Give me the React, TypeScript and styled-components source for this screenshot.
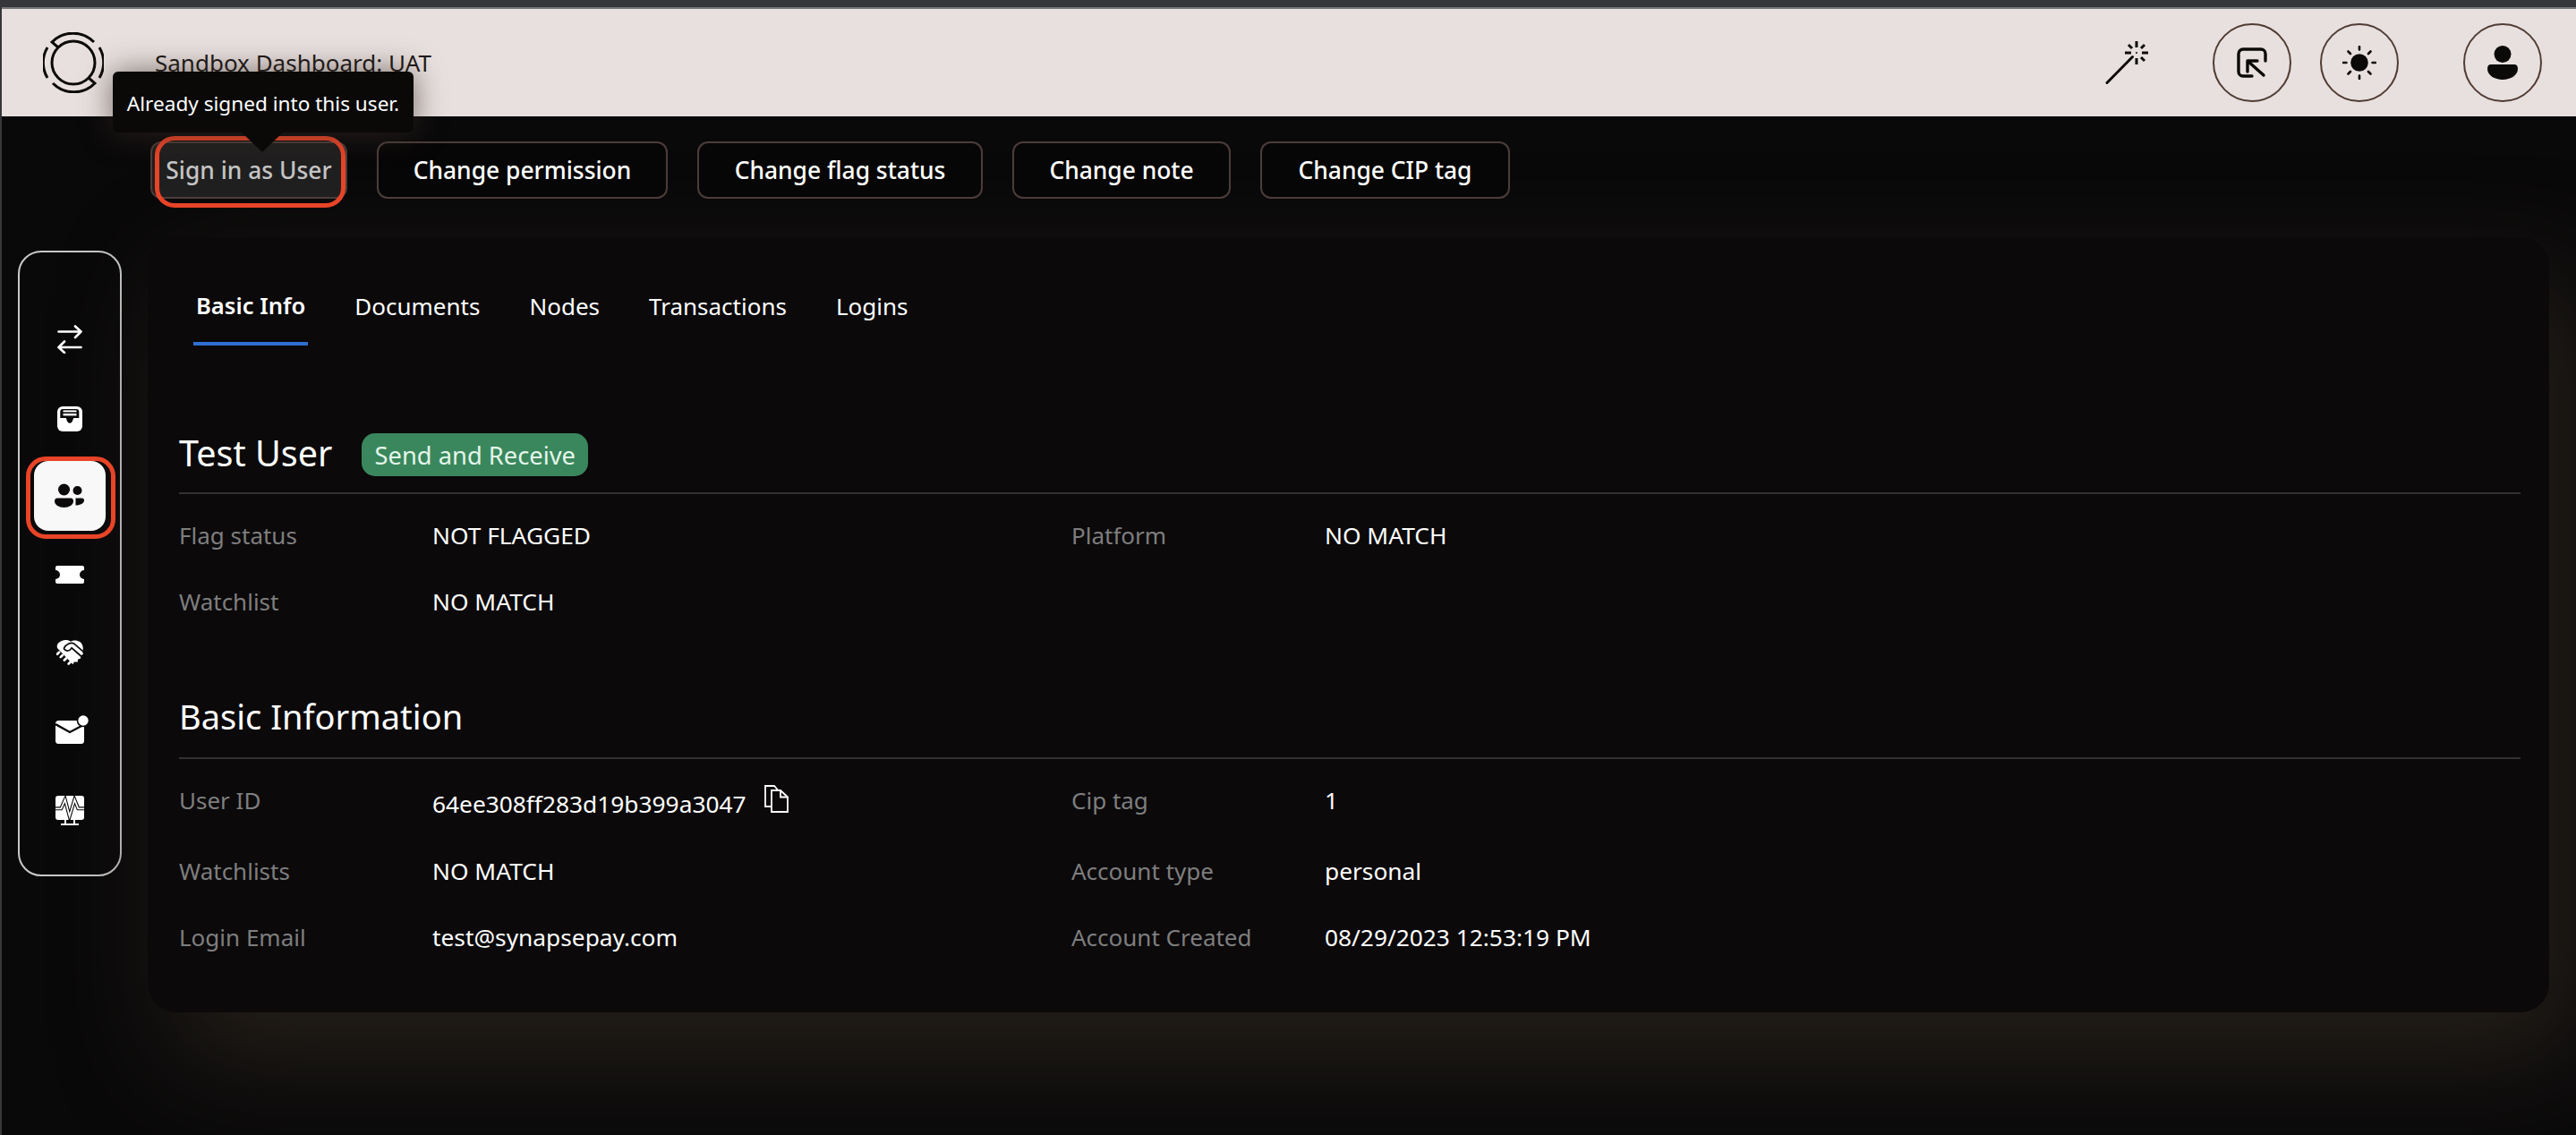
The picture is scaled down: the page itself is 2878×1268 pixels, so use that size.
import React from "react";
import styled, { createGlobalStyle } from "styled-components";

const GlobalStyle = createGlobalStyle`
  html, body {
    margin: 0;
    padding: 0;
    background: #0a090a;
    font-family: "Noto Sans", "Open Sans", sans-serif;
    color: #ffffff;
  }
  #root {
    min-height: 1268px;
  }
`;

const Page = styled.div`
  width: 2878px;
  height: 1268px;
  overflow: hidden;
  background: #0a090a;
  border-left: 2px solid #37373a;
  box-sizing: border-box;
  display: flex;
  flex-direction: column;
`;

const TopStrip = styled.div`
  height: 8px;
  margin-left: -2px;
  background: #35363a;
  border-bottom: 2px solid #77777a;
  flex: none;
`;

const Header = styled.header`
  height: 120px;
  flex: none;
  margin-left: -2px;
  padding: 0 38px 0 48px;
  background: #e8e0df;
  display: flex;
  align-items: center;
  color: #0c0a09;
`;

const Title = styled.div`
  margin-left: 57px;
  font-size: 26px;
  line-height: 36px;
  color: #1b1716;
`;

const HeaderTools = styled.div`
  margin-left: auto;
  display: flex;
  align-items: center;
`;

const WandSlot = styled.div`
  width: 48px;
  height: 48px;
  margin-right: 72px;
`;

const RoundButton = styled.button<{ $gap?: number }>`
  width: 88px;
  height: 88px;
  padding: 0;
  margin-left: ${(p) => p.$gap ?? 0}px;
  border-radius: 50%;
  border: 2px solid #503c33;
  background: transparent;
  display: flex;
  align-items: center;
  justify-content: center;
`;

const Main = styled.main`
  flex: 1;
  display: flex;
  align-items: flex-start;
  padding: 0 30px 0 18px;
  gap: 29px;
`;

const Sidebar = styled.nav`
  flex: none;
  width: 116px;
  height: 699px;
  margin-top: 150px;
  box-sizing: border-box;
  border: 2px solid #c9c9c9;
  border-radius: 26px;
  padding-top: 54px;
  display: flex;
  flex-direction: column;
  align-items: center;
`;

const SideItem = styled.div<{ $active?: boolean; $h: number; $nudge?: number }>`
  position: relative;
  width: 80px;
  height: ${(p) => p.$h}px;
  flex: none;
  box-sizing: border-box;
  padding-left: ${(p) => p.$nudge ?? 0}px;
  display: flex;
  align-items: center;
  justify-content: center;
  border-radius: 16px;
  background: ${(p) => (p.$active ? "#f8f8f8" : "transparent")};
`;

const SideRing = styled.span`
  position: absolute;
  inset: -5px -11px -9px -9px;
  border: 5px solid #e84427;
  border-radius: 22px;
  pointer-events: none;
`;

const Content = styled.div`
  flex: 1;
  min-width: 0;
`;

const ActionBar = styled.div`
  display: flex;
  gap: 33px;
  padding: 28px 0 0 3px;
`;

const ActionWrap = styled.div`
  position: relative;
`;

const ActionButton = styled.button<{ $w: number; $disabled?: boolean }>`
  width: ${(p) => p.$w}px;
  height: 64px;
  padding: 0;
  box-sizing: border-box;
  border: 2px solid #4b3d39;
  border-radius: 12px;
  background: ${(p) => (p.$disabled ? "#201f1f" : "#070606")};
  color: ${(p) => (p.$disabled ? "#c4c4c4" : "#ffffff")};
  font-family: inherit;
  font-size: 26.4px;
  font-weight: 500;
  white-space: nowrap;
`;

const RedMark = styled.span`
  position: absolute;
  top: -6px;
  left: 5px;
  right: 2px;
  bottom: -10px;
  border: 5px solid #e84427;
  border-radius: 22px;
  pointer-events: none;
`;

const Tooltip = styled.div`
  position: absolute;
  z-index: 3;
  top: -78px;
  left: -42px;
  width: 336px;
  height: 68px;
  box-sizing: border-box;
  padding-top: 2px;
  border-radius: 6px;
  background: #0a0908;
  box-shadow: 0 0 34px rgba(58, 46, 38, 0.65);
  color: #ffffff;
  font-size: 22.6px;
  display: flex;
  align-items: center;
  justify-content: center;
  white-space: nowrap;

  &::after {
    content: "";
    position: absolute;
    top: 68px;
    left: 144px;
    border-left: 23px solid transparent;
    border-right: 23px solid transparent;
    border-top: 22px solid #0a0908;
  }
`;

const Card = styled.section`
  margin-top: 43px;
  box-sizing: border-box;
  height: 866px;
  padding: 40px 32px 0 35px;
  border-radius: 32px;
  background: #0b090a;
  box-shadow: 30px 50px 120px #25201a;
`;

const Tabs = styled.div`
  display: flex;
  margin-left: 16px;
  gap: 49px;
`;

const Tab = styled.div<{ $active?: boolean }>`
  height: 81px;
  box-sizing: border-box;
  padding: 19px 3px 0;
  font-size: ${(p) => (p.$active ? 25.6 : 26)}px;
  line-height: 36px;
  font-weight: ${(p) => (p.$active ? 600 : 400)};
  border-bottom: 4px solid ${(p) => (p.$active ? "#2f6fd1" : "transparent")};
  white-space: nowrap;
`;

const SectionHead = styled.div<{ $top: number; $pad: number }>`
  margin-top: ${(p) => p.$top}px;
  padding-bottom: ${(p) => p.$pad}px;
  border-bottom: 2px solid #333233;
  display: flex;
  align-items: center;
  gap: 33px;
  height: 48px;
  box-sizing: content-box;
`;

const SectionTitle = styled.h2<{ $size: number; $lift: number }>`
  margin: 0 0 ${(p) => p.$lift}px;
  font-size: ${(p) => p.$size}px;
  line-height: 48px;
  font-weight: 400;
  white-space: nowrap;
`;

const Badge = styled.span`
  height: 48px;
  width: 253px;
  border-radius: 15px;
  background: #3a875d;
  color: #e4f6ea;
  font-size: 27.3px;
  display: flex;
  align-items: center;
  justify-content: center;
  white-space: nowrap;
`;

const InfoGrid = styled.div`
  padding-top: 9px;
  display: grid;
  grid-template-columns: 997px 1fr;
`;

const InfoItem = styled.div<{ $h?: number }>`
  height: ${(p) => p.$h ?? 74}px;
  display: flex;
  align-items: center;
  font-size: 26px;
  line-height: 36px;
`;

const InfoLabel = styled.span<{ $lift?: number }>`
  width: 283px;
  flex: none;
  margin-bottom: ${(p) => p.$lift ?? 0}px;
  color: #7e7e7e;
`;

const InfoValue = styled.span<{ $lift?: number; $drop?: number }>`
  color: #ffffff;
  font-size: 26.3px;
  display: flex;
  align-items: center;
  margin-bottom: ${(p) => p.$lift ?? 0}px;
  margin-top: ${(p) => p.$drop ?? 0}px;
`;

const CopySlot = styled.span`
  margin-left: 20px;
  margin-top: -12px;
  display: flex;
`;

function Logo() {
  return (
    <svg width="68" height="68" viewBox="0 0 68 68" fill="none" stroke="#0c0a09" strokeWidth="3">
      <circle cx="34" cy="34" r="24" />
      <path d="M17 17 L10 11 A33 33 0 0 1 57 11" />
      <path d="M51 51 L58 57 A33 33 0 0 1 11 57" />
      <path d="M5 17 A33 33 0 0 0 5 51" />
      <path d="M63 17 A33 33 0 0 1 63 51" />
    </svg>
  );
}

function WandIcon() {
  return (
    <svg width="48" height="48" viewBox="0 0 48 48" fill="none" stroke="#0c0a09" strokeWidth="3" strokeLinecap="round">
      <path d="M2 46.5 L30.5 17.5" />
      <path strokeLinecap="butt" d="M35 0V7M35 19V26M22 13H29M41 13H48M26 4L30 8M44 4L40 8M40 18L44 22" />
      <circle cx="35" cy="13" r="1" fill="#0c0a09" stroke="none" />
    </svg>
  );
}

function BoxArrowIcon() {
  return (
    <svg width="34" height="34" viewBox="0 0 34 34" fill="none" stroke="#0c0a09" strokeWidth="3.4" strokeLinecap="round" strokeLinejoin="round">
      <path d="M32 15V7a5 5 0 0 0-5-5H7a5 5 0 0 0-5 5V27a5 5 0 0 0 5 5H17" />
      <path d="M23 15H12V27M12 15L30 31" />
    </svg>
  );
}

function SunIcon() {
  return (
    <svg width="38" height="38" viewBox="0 0 38 38" fill="none" stroke="#0c0a09" strokeWidth="2.6" strokeLinecap="round">
      <circle cx="19" cy="19" r="9.8" fill="#0c0a09" stroke="none" />
      <path d="M19 1V4.5M19 33.5V37M1 19H4.5M33.5 19H37M6.5 6.5L9 9M29 29L31.5 31.5M31.5 6.5L29 9M9 29L6.5 31.5" />
    </svg>
  );
}

function PersonIcon() {
  return (
    <svg width="34" height="38" viewBox="0 0 34 38" fill="#0c0a09">
      <circle cx="17" cy="9.5" r="9.5" />
      <path d="M4 21H30Q34 21 34 26C34 33 26 38 17 38C8 38 0 33 0 26Q0 21 4 21Z" />
    </svg>
  );
}

function SwapIcon() {
  return (
    <svg width="28" height="32" viewBox="0 0 28 32" fill="none" stroke="#ffffff" strokeWidth="2.6" strokeLinecap="round" strokeLinejoin="round">
      <path d="M1.5 7.5H26.5M20 1.5L26.5 7.5L20 14" />
      <path d="M26.5 25H1.5M8 18.5L1.5 25L8 31" />
    </svg>
  );
}

function InboxIcon() {
  return (
    <svg width="28" height="28" viewBox="0 0 28 28">
      <rect width="28" height="28" rx="6" fill="#ffffff" />
      <path d="M3.3 6a3 3 0 0 1 3-3H21.3a3 3 0 0 1 3 3V13H18.5C17.5 13 17.5 18.7 14 18.7S10.5 13 9.5 13H3.3Z" fill="#0a0909" />
      <rect x="6.5" y="4.4" width="15" height="2" fill="#ffffff" />
      <rect x="6.5" y="8" width="15" height="2.4" fill="#ffffff" />
    </svg>
  );
}

function UsersIcon() {
  return (
    <svg width="34" height="28" viewBox="0 0 34 28" fill="#0c0a0a">
      <circle cx="10.5" cy="7" r="6.5" />
      <circle cx="25.5" cy="8" r="5" />
      <path d="M3 16.5H18Q21 16.5 21 20C21 24 16 27 10.5 27C5 27 0 24 0 20Q0 16.5 3 16.5Z" />
      <path d="M23.5 16.5H30.5Q33 16.5 33 19C33 22 29 24.5 23.5 24.5Q23.5 20 23.5 16.5Z" />
    </svg>
  );
}

function TicketIcon() {
  return (
    <svg width="32" height="20" viewBox="0 0 32 20" fill="#ffffff">
      <path d="M2 0H30a2 2 0 0 1 2 2V5a5 5 0 0 0 0 10V18a2 2 0 0 1-2 2H2a2 2 0 0 1-2-2V15a5 5 0 0 0 0-10V2a2 2 0 0 1 2-2Z" />
    </svg>
  );
}

function HandshakeIcon() {
  return (
    <svg width="30" height="29" viewBox="0 0 88 85" fill="none">
      <path
        d="M3 26C-1 14 10 4 24 1C33-1 41 1 47 5C55 0 68 0 77 6C87 14 90 28 85 38L88 46L78 52L80 60L70 64L70 72L58 72L54 80Z"
        fill="#ffffff"
      />
      <path d="M24 28C30 14 48 6 58 12L86 36" stroke="#0a0909" strokeWidth="5" />
      <path d="M24 28C32 40 44 36 50 26L80 52" stroke="#0a0909" strokeWidth="5" />
      <path d="M3 46L9 40M14 56L20 50M26 66L32 60M40 78L46 72" stroke="#ffffff" strokeWidth="8" strokeLinecap="round" />
    </svg>
  );
}

function MailIcon() {
  return (
    <svg width="38" height="33" viewBox="0 0 38 33">
      <rect x="0" y="7" width="32" height="26" rx="3.5" fill="#ffffff" />
      <path d="M0 11L16 20L31 12" fill="none" stroke="#0a0909" strokeWidth="2.4" />
      <circle cx="31" cy="7" r="6.5" fill="#ffffff" stroke="#0a0909" strokeWidth="1.6" />
    </svg>
  );
}

function MonitorIcon() {
  return (
    <svg width="32" height="33" viewBox="0 0 32 33" fill="none">
      <rect width="32" height="27" rx="3" fill="#ffffff" />
      <path d="M0 14.3H6.3L10.7 4.3L15.7 23L21.3 4.3L25.3 14.3H32" stroke="#0a0909" strokeWidth="4" />
      <path d="M0 14.3H6.3L10.7 4.3L15.7 23L21.3 4.3L25.3 14.3H32" stroke="#ffffff" strokeWidth="1.8" />
      <path d="M11 27V32M21 27V32M6 32H26" stroke="#ffffff" strokeWidth="2" />
    </svg>
  );
}

function CopyIcon() {
  return (
    <svg width="27" height="31" viewBox="0 0 27 31" fill="none" stroke="#ffffff" strokeWidth="1.8">
      <path d="M8 24H1V1H11L15 5.5" />
      <path d="M8 6H18L26 13.5V30H8Z" />
      <path d="M18 6V13.5H26" />
    </svg>
  );
}

export default function App() {
  return (
    <Page>
      <GlobalStyle />
      <TopStrip />
      <Header>
        <Logo />
        <Title>Sandbox Dashboard: UAT</Title>
        <HeaderTools>
          <WandSlot>
            <WandIcon />
          </WandSlot>
          <RoundButton>
            <BoxArrowIcon />
          </RoundButton>
          <RoundButton $gap={32}>
            <SunIcon />
          </RoundButton>
          <RoundButton $gap={72}>
            <PersonIcon />
          </RoundButton>
        </HeaderTools>
      </Header>
      <Main>
        <Sidebar>
          <SideItem $h={85}>
            <SwapIcon />
          </SideItem>
          <SideItem $h={94}>
            <InboxIcon />
          </SideItem>
          <SideItem $h={78} $active>
            <UsersIcon />
            <SideRing />
          </SideItem>
          <SideItem $h={98}>
            <TicketIcon />
          </SideItem>
          <SideItem $h={76}>
            <HandshakeIcon />
          </SideItem>
          <SideItem $h={95} $nudge={6}>
            <MailIcon />
          </SideItem>
          <SideItem $h={87}>
            <MonitorIcon />
          </SideItem>
        </Sidebar>
        <Content>
          <ActionBar>
            <ActionWrap>
              <ActionButton $w={220} $disabled>
                Sign in as User
              </ActionButton>
              <RedMark />
              <Tooltip>Already signed into this user.</Tooltip>
            </ActionWrap>
            <ActionButton $w={325}>Change permission</ActionButton>
            <ActionButton $w={319}>Change flag status</ActionButton>
            <ActionButton $w={244}>Change note</ActionButton>
            <ActionButton $w={279}>Change CIP tag</ActionButton>
          </ActionBar>
          <Card>
            <Tabs>
              <Tab $active>Basic Info</Tab>
              <Tab>Documents</Tab>
              <Tab>Nodes</Tab>
              <Tab>Transactions</Tab>
              <Tab>Logins</Tab>
            </Tabs>
            <SectionHead $top={98} $pad={18}>
              <SectionTitle $size={39.5} $lift={5}>Test User</SectionTitle>
              <Badge>Send and Receive</Badge>
            </SectionHead>
            <InfoGrid>
              <InfoItem>
                <InfoLabel>Flag status</InfoLabel>
                <InfoValue>NOT FLAGGED</InfoValue>
              </InfoItem>
              <InfoItem>
                <InfoLabel>Platform</InfoLabel>
                <InfoValue>NO MATCH</InfoValue>
              </InfoItem>
              <InfoItem>
                <InfoLabel>Watchlist</InfoLabel>
                <InfoValue>NO MATCH</InfoValue>
              </InfoItem>
            </InfoGrid>
            <SectionHead $top={68} $pad={21}>
              <SectionTitle $size={38} $lift={2}>Basic Information</SectionTitle>
            </SectionHead>
            <InfoGrid>
              <InfoItem $h={79}>
                <InfoLabel $lift={6}>User ID</InfoLabel>
                <InfoValue $drop={3}>
                  64ee308ff283d19b399a3047
                  <CopySlot>
                    <CopyIcon />
                  </CopySlot>
                </InfoValue>
              </InfoItem>
              <InfoItem $h={79}>
                <InfoLabel $lift={6}>Cip tag</InfoLabel>
                <InfoValue $lift={6}>1</InfoValue>
              </InfoItem>
              <InfoItem>
                <InfoLabel>Watchlists</InfoLabel>
                <InfoValue>NO MATCH</InfoValue>
              </InfoItem>
              <InfoItem>
                <InfoLabel>Account type</InfoLabel>
                <InfoValue>personal</InfoValue>
              </InfoItem>
              <InfoItem>
                <InfoLabel>Login Email</InfoLabel>
                <InfoValue>test@synapsepay.com</InfoValue>
              </InfoItem>
              <InfoItem>
                <InfoLabel>Account Created</InfoLabel>
                <InfoValue>08/29/2023 12:53:19 PM</InfoValue>
              </InfoItem>
            </InfoGrid>
          </Card>
        </Content>
      </Main>
    </Page>
  );
}
